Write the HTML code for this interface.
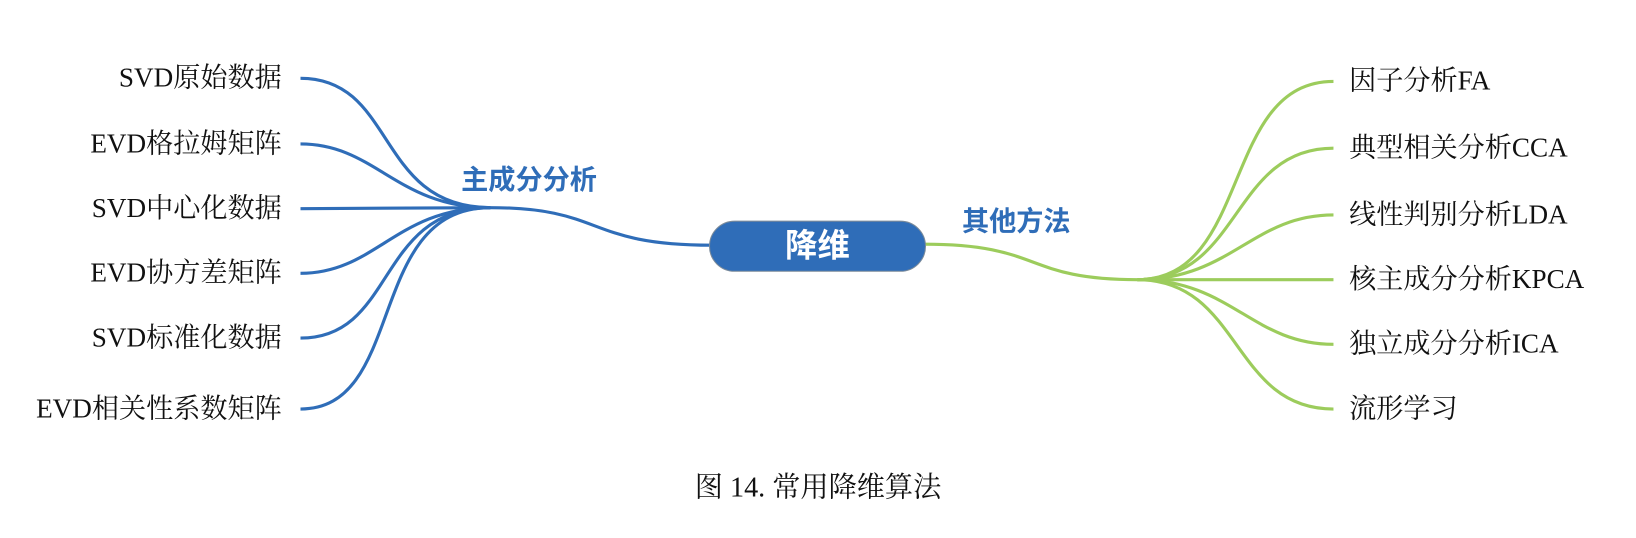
<!DOCTYPE html>
<html><head><meta charset="utf-8"><style>
body{margin:0;width:1636px;height:538px;background:#fff;overflow:hidden;font-family:"Liberation Serif","Noto Serif CJK SC",serif;}
#w{position:absolute;left:0;top:0;width:1568px;height:516px;transform:scale(1.0434);transform-origin:0 0}
.t{position:absolute;font-size:26px;color:#111;line-height:30px;white-space:nowrap}
.l{right:1298px;text-align:right}
.r{left:1293px}
.b{position:absolute;font-family:"Liberation Sans","Noto Sans CJK SC",sans-serif;font-weight:bold;color:#2f6db8;font-size:26px;line-height:30px;white-space:nowrap}
</style></head><body><div id="w">
<svg width="1568" height="516" style="position:absolute;left:0;top:0">
<g fill="none" stroke="#2f6db8" stroke-width="3">
<path d="M288 75 C380 75 360 199 470 199"/>
<path d="M288 138 C360 138 380 199 470 199"/>
<path d="M288 200 L470 199"/>
<path d="M288 262 C360 262 380 199 470 199"/>
<path d="M288 324 C380 324 360 199 470 199"/>
<path d="M288 392 C390 392 350 199 470 199"/>
<path d="M470 199 C580 199 560 235 682 235"/>
</g>
<g fill="none" stroke="#9ccc5c" stroke-width="3">
<path d="M886 234 C1000 234 980 268 1090 268"/>
<path d="M1090 268 C1200 268 1170 78 1278 78"/>
<path d="M1090 268 C1190 268 1180 142 1278 142"/>
<path d="M1090 268 C1180 268 1200 206 1278 206"/>
<path d="M1090 268 L1278 268"/>
<path d="M1090 268 C1180 268 1200 330 1278 330"/>
<path d="M1090 268 C1190 268 1180 392 1278 392"/>
</g>
<rect x="680" y="212" width="207" height="48" rx="24" fill="#2f6db8" stroke="#7a8a9a" stroke-width="1"/>
</svg>
<div class="b" style="left:680px;top:216px;width:207px;text-align:center;color:#fff;font-size:31px;line-height:40px">降维</div>
<div class="b" style="left:442px;top:157px">主成分分析</div>
<div class="b" style="left:922px;top:197px">其他方法</div>
<div class="t l" style="top:60px">SVD原始数据</div>
<div class="t l" style="top:123px">EVD格拉姆矩阵</div>
<div class="t l" style="top:185px">SVD中心化数据</div>
<div class="t l" style="top:247px">EVD协方差矩阵</div>
<div class="t l" style="top:309px">SVD标准化数据</div>
<div class="t l" style="top:377px">EVD相关性系数矩阵</div>
<div class="t r" style="top:63px">因子分析FA</div>
<div class="t r" style="top:127px">典型相关分析CCA</div>
<div class="t r" style="top:191px">线性判别分析LDA</div>
<div class="t r" style="top:253px">核主成分分析KPCA</div>
<div class="t r" style="top:315px">独立成分分析ICA</div>
<div class="t r" style="top:377px">流形学习</div>
<div class="t" style="left:0;width:1568px;text-align:center;top:452px;font-size:27px">图 14. 常用降维算法</div>
</div></body></html>
